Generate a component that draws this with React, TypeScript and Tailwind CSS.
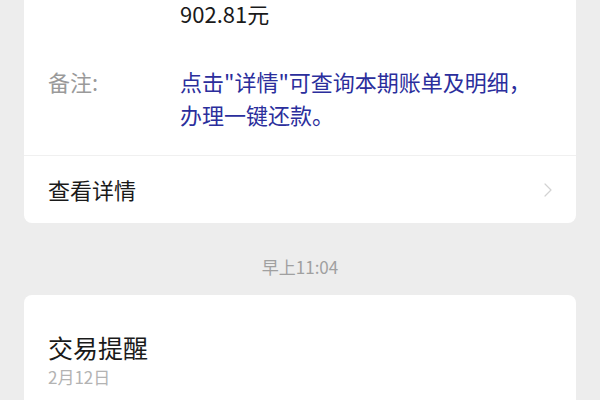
import { ChevronRight } from 'lucide-react'

const font = { fontFamily: '"Noto Sans CJK SC", "Noto Sans", sans-serif' }

export default function App() {
  return (
    <div className="w-[600px] h-[400px] overflow-hidden bg-[#ededed] px-6" style={font}>
      <div className="bg-white rounded-b-lg">
        <div className="flex pt-[1px] pl-6">
          <span className="w-[132px] shrink-0" />
          <span className="text-[22px] leading-[24px] text-[#1a1a1a]">902.81元</span>
        </div>
        <div className="flex pt-[40px] pb-[24px] px-6 border-b border-[#f0f0f0]">
          <span className="w-[132px] shrink-0 text-[22px] leading-[33px] text-[#9a9a9a]">备注:</span>
          <p className="text-[22px] leading-[33px] text-[#2b2e9c]">
            点击"详情"可查询本期账单及明细，
            <br />
            办理一键还款。
          </p>
        </div>
        <div className="flex h-[67px] items-center justify-between pl-6 pr-4">
          <span className="text-[22px] text-[#1a1a1a]">查看详情</span>
          <ChevronRight className="w-6 h-6 text-[#d2d2d2]" strokeWidth={1.2} />
        </div>
      </div>

      <div className="flex justify-center pt-[33px] pb-[17px]">
        <span className="text-[17px] leading-[22px] text-[#a0a0a0]">早上11:04</span>
      </div>

      <div className="bg-white rounded-t-lg px-6 pt-[34px] pb-6">
        <div className="text-[25px] leading-9 text-[#1a1a1a]">交易提醒</div>
        <div className="text-[17px] leading-6 text-[#b3b3b3]">2月12日</div>
      </div>
    </div>
  )
}
